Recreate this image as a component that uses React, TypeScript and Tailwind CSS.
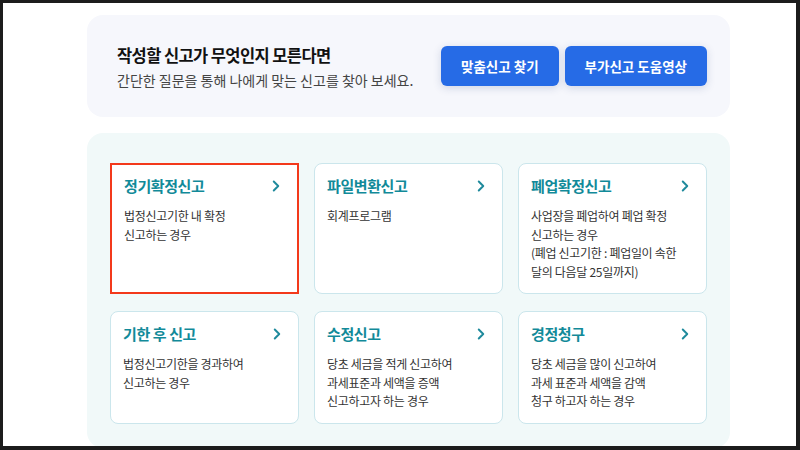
import { ChevronRight } from "lucide-react";

type Item = {
  title: string;
  lines: string[];
  active?: boolean;
};

const items: Item[] = [
  { title: "정기확정신고", lines: ["법정신고기한 내 확정", "신고하는 경우"], active: true },
  { title: "파일변환신고", lines: ["회계프로그램"] },
  {
    title: "폐업확정신고",
    lines: [
      "사업장을 폐업하여 폐업 확정",
      "신고하는 경우",
      "(폐업 신고기한 : 폐업일이 속한",
      "달의 다음달 25일까지)",
    ],
  },
  { title: "기한 후 신고", lines: ["법정신고기한을 경과하여", "신고하는 경우"] },
  {
    title: "수정신고",
    lines: ["당초 세금을 적게 신고하여", "과세표준과 세액을 증액", "신고하고자 하는 경우"],
  },
  {
    title: "경정청구",
    lines: ["당초 세금을 많이 신고하여", "과세 표준과 세액을 감액", "청구 하고자 하는 경우"],
  },
];

function Card({ item }: { item: Item }) {
  return (
    <div
      className={
        item.active
          ? "bg-white border-2 border-[#f3391b] px-3 pt-[11px] pb-[11px]"
          : "bg-white border border-[#cbe6ec] rounded-lg px-3 pt-3 pb-3"
      }
    >
      {/* 제목 + 화살표 */}
      <div className="flex items-center justify-between h-5">
        <span className="text-[15px] leading-5 font-bold tracking-[-0.4px] text-[#128a99]">
          {item.title}
        </span>
        <ChevronRight size={18} strokeWidth={2.6} className="text-[#1f8a9c]" />
      </div>
      <div className="mt-[11px] text-[12px] leading-[18.5px] tracking-[-0.3px] text-[#333]">
        {item.lines.map((l) => (
          <div key={l}>{l}</div>
        ))}
      </div>
    </div>
  );
}

export default function App() {
  return (
    <div
      className="w-[800px] h-[450px] bg-[#1c1c1c] pt-[3px] pl-[3px] pr-[4px] pb-[4px]"
      style={{ fontFamily: '"Noto Sans CJK KR", "Noto Sans", sans-serif' }}
    >
      <div className="bg-white h-full overflow-hidden">
        <div className="ml-[84px] w-[643px] pt-3">
          {/* ===== 안내 ===== */}
          <div className="h-[102px] rounded-2xl bg-[#f6f7fc] pl-[30px] pr-[23px] flex items-center justify-between">
            <div>
              <div className="text-[16.5px] leading-6 font-bold tracking-[-0.6px] text-[#111]">
                작성할 신고가 무엇인지 모른다면
              </div>
              <div className="mt-[3px] text-[14px] leading-5 text-[#444]">
                간단한 질문을 통해 나에게 맞는 신고를 찾아 보세요.
              </div>
            </div>
            <div className="flex gap-[6px]">
              <button className="h-10 px-5 rounded-md bg-[#266be6] text-white text-[13.5px] font-bold shadow-[0_2px_8px_rgba(40,60,120,0.18)]">
                맞춤신고 찾기
              </button>
              <button className="h-10 px-5 rounded-md bg-[#266be6] text-white text-[13.5px] font-bold shadow-[0_2px_8px_rgba(40,60,120,0.18)]">
                부가신고 도움영상
              </button>
            </div>
          </div>

          {/* ===== 신고 종류 ===== */}
          <div className="mt-4 rounded-2xl bg-[#f1f9f9] px-[23px] pt-[30px] pb-[24px]">
            <div className="grid grid-cols-3 gap-x-[15px] gap-y-[17px]">
              {items.map((it) => (
                <Card key={it.title} item={it} />
              ))}
            </div>
          </div>
        </div>
      </div>
    </div>
  );
}
